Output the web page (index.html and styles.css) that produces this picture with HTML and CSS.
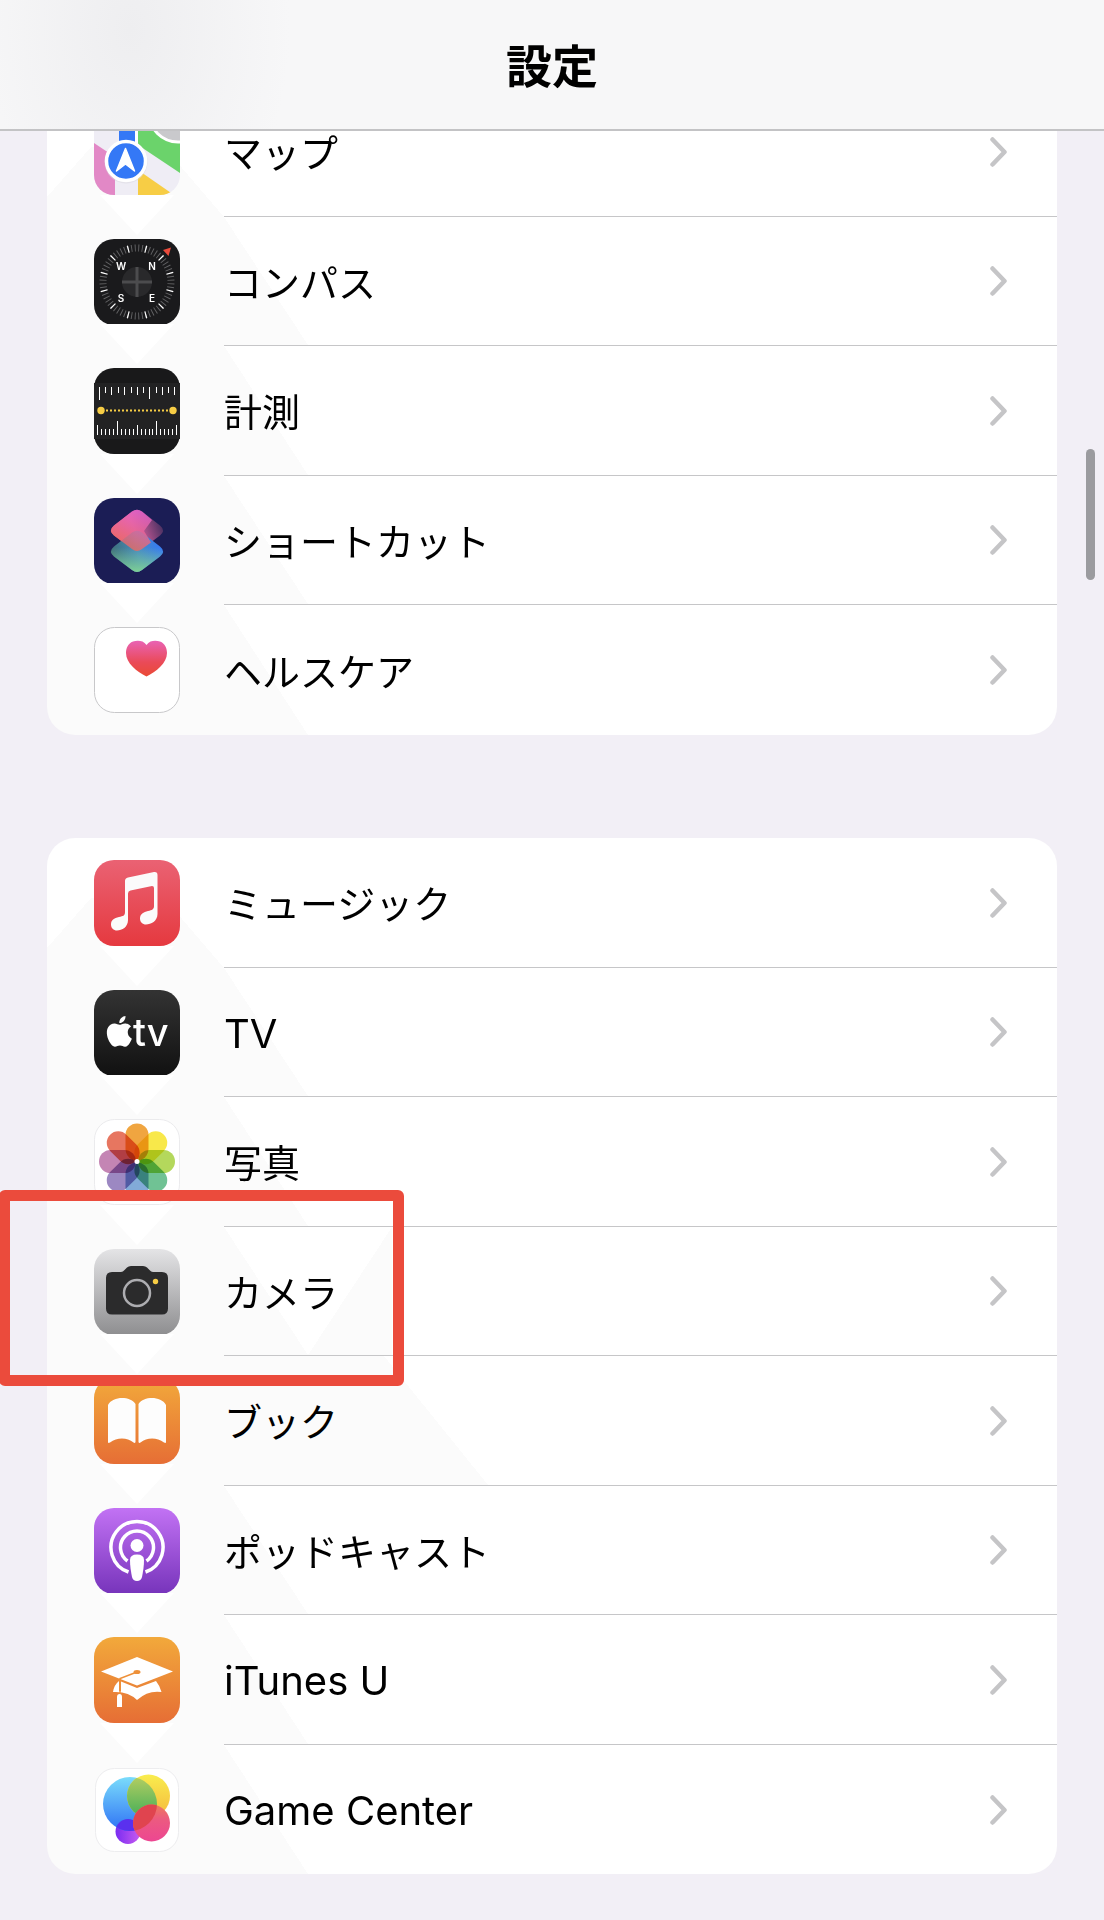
FILE: index.html
```html
<!DOCTYPE html>
<html lang="ja">
<head>
<meta charset="utf-8">
<meta name="viewport" content="width=device-width, initial-scale=1">
<title>設定</title>
<link rel="stylesheet" href="styles.css">
</head>
<body>
<svg class="defs" aria-hidden="true">
  <defs>
    <symbol id="chevron" viewBox="0 0 18 30"><path d="M2.500 2.500 14.500 15 2.500 27.500" fill="none" stroke="#c5c5c7" stroke-width="4.500" stroke-linecap="round" stroke-linejoin="round"/></symbol>
    <linearGradient id="gRed" x1="0" y1="0" x2="0" y2="1"><stop offset="0" stop-color="#ea6273"/><stop offset="1" stop-color="#e5393f"/></linearGradient>
    <linearGradient id="gBlack" x1="0" y1="0" x2="0" y2="1"><stop offset="0" stop-color="#333"/><stop offset="1" stop-color="#111"/></linearGradient>
    <linearGradient id="gGray" x1="0" y1="0" x2="0" y2="1"><stop offset="0" stop-color="#e4e4e6"/><stop offset="1" stop-color="#8e8e90"/></linearGradient>
    <linearGradient id="gOrange" x1="0" y1="0" x2="0" y2="1"><stop offset="0" stop-color="#f2a93b"/><stop offset="1" stop-color="#e66e35"/></linearGradient>
    <linearGradient id="gPurple" x1="0" y1="0" x2="0" y2="1"><stop offset="0" stop-color="#c272f4"/><stop offset="1" stop-color="#7734bb"/></linearGradient>
    <linearGradient id="gHeart" x1="0" y1="0" x2="0" y2="1"><stop offset="0" stop-color="#e963b4"/><stop offset=".6" stop-color="#ea4a58"/><stop offset="1" stop-color="#ea4a35"/></linearGradient>
    <linearGradient id="gTop" x1="0" y1=".8" x2="1" y2=".5"><stop offset="0" stop-color="#ee6a50"/><stop offset=".5" stop-color="#de62a0"/><stop offset="1" stop-color="#4f3264"/></linearGradient>
    <linearGradient id="gTopWarm" x1=".6" y1="0" x2=".3" y2="1"><stop offset="0" stop-color="#e763d0"/><stop offset="1" stop-color="#ec6a55"/></linearGradient>
    <linearGradient id="gLow" x1="0" y1=".4" x2="1" y2=".3"><stop offset="0" stop-color="#3d6e78"/><stop offset=".5" stop-color="#488dc0"/><stop offset="1" stop-color="#3377fa"/></linearGradient>
    <linearGradient id="gLowFade" x1="0" y1="0" x2="0" y2="1"><stop offset=".4" stop-color="#7ac998" stop-opacity="0"/><stop offset="1" stop-color="#7ed095"/></linearGradient>
    <linearGradient id="gBlue" x1="0" y1="0" x2="0" y2="1"><stop offset="0" stop-color="#7adcfb"/><stop offset="1" stop-color="#2f72f5"/></linearGradient>
    <linearGradient id="gYellow" x1="0" y1="0" x2="0" y2="1"><stop offset="0" stop-color="#f9ed4e"/><stop offset="1" stop-color="#f5b83d"/></linearGradient>
    <linearGradient id="gGreen" x1="0" y1="0" x2="0" y2="1"><stop offset="0" stop-color="#b9cf62"/><stop offset="1" stop-color="#45ae58"/></linearGradient>
    <linearGradient id="gViolet" x1="0" y1="0" x2="1" y2="0"><stop offset="0" stop-color="#7a2cf2"/><stop offset="1" stop-color="#c95cf0"/></linearGradient>
    <linearGradient id="gPink" x1="0" y1="0" x2="0" y2="1"><stop offset="0" stop-color="#ee7a5c"/><stop offset=".4" stop-color="#ec5a80"/><stop offset="1" stop-color="#ed4692"/></linearGradient>
    <clipPath id="tile"><rect width="86" height="86" rx="20"/></clipPath>
    <clipPath id="blueBall"><circle cx="36" cy="37" r="27"/></clipPath>
  </defs>
</svg>

<header class="navbar"><h1>設定</h1></header>

<main class="settings">
  <ul class="card">
    <li class="item"><a class="row" href="#maps">
      <svg class="icon" viewBox="0 0 86 86" aria-hidden="true"><g clip-path="url(#tile)">
        <rect width="86" height="86" fill="#efedf5"/>
        <path d="M0 34 21 48V86H0Z" fill="#e288c6"/>
        <path d="M44 0H86V64L44 36Z" fill="#6bd36b"/>
        <path d="M44 61 80 86H44Z" fill="#f7cd45"/>
        <path d="M42.500 0V36" stroke="#fff" stroke-width="3"/>
        <rect x="25" width="16" height="45" fill="#3478f6"/>
        <circle cx="84" cy="4" r="29" fill="#c9c9cc" stroke="#fff" stroke-width="3"/>
        <circle cx="32" cy="53" r="21.500" fill="#d9d7df" opacity=".5"/>
        <circle cx="32" cy="52" r="19.500" fill="#3478f6" stroke="#fff" stroke-width="3.500"/>
        <path d="M31.500 39.500 40.500 62 31.500 55 22.500 62Z" fill="#fff" stroke="#fff" stroke-width="1.500" stroke-linejoin="round"/>
      </g></svg>
      <span class="body"><span class="label">マップ</span><svg class="chevron" aria-hidden="true"><use href="#chevron"/></svg></span></a></li>
    <li class="item"><a class="row" href="#compass">
      <svg class="icon" viewBox="0 0 86 86" aria-hidden="true">
        <rect width="86" height="86" rx="20" fill="#1a1a1c"/>
        <circle cx="43" cy="43" r="34" pathLength="360" fill="none" stroke="#626264" stroke-width="7" stroke-dasharray="1.600 4.400" stroke-dashoffset="-2.200"/>
        <circle cx="43" cy="43" r="34" pathLength="360" fill="none" stroke="#fff" stroke-width="7" stroke-dasharray="2 28" stroke-dashoffset="-14"/>
        <circle cx="43" cy="43" r="15" fill="#29292b"/>
        <path d="M43 28V58M28 43H58" stroke="#4c4c4e" stroke-width="3"/>
        <path d="M69 11 77 8.500 74.500 17Z" fill="#eb4b3c"/>
        <g class="compass-text"><text x="27" y="31">W</text><text x="58" y="31">N</text><text x="27" y="63">S</text><text x="58" y="63">E</text></g>
      </svg>
      <span class="body"><span class="label">コンパス</span><svg class="chevron" aria-hidden="true"><use href="#chevron"/></svg></span></a></li>
    <li class="item"><a class="row" href="#measure">
      <svg class="icon" viewBox="0 0 86 86" aria-hidden="true">
        <rect width="86" height="86" rx="20" fill="#19191a"/><rect y="15" width="86" height="56" fill="#222223"/>
        <path d="M5.500 19v13M11.500 19v6M17.500 19v8M24.500 19v6M30.500 19v8M37.500 19v6M43.500 19v8M49.500 19v6M55.500 19v12M62.500 19v6M68.500 19v8M74.500 19v6M80.500 19v8" stroke="#fff"/>
        <path d="M3.500 67v-10M7.500 67v-6M11.500 67v-6M15.500 67v-6M19.500 67v-6M23.500 67v-14M27.500 67v-6M31.500 67v-6M35.500 67v-6M39.500 67v-6M43.500 67v-10M47.500 67v-6M51.500 67v-6M55.500 67v-6M58.500 67v-6M62.500 67v-14M66.500 67v-6M70.500 67v-6M74.500 67v-6M78.500 67v-6M82.500 67v-10" stroke="#fff"/>
        <path d="M12 42.500H76" stroke="#f7cd45" stroke-width="2" stroke-dasharray="2 2"/>
        <circle cx="7" cy="42.500" r="3.700" fill="#f7cd45"/><circle cx="79" cy="42.500" r="3.700" fill="#f7cd45"/>
      </svg>
      <span class="body"><span class="label">計測</span><svg class="chevron" aria-hidden="true"><use href="#chevron"/></svg></span></a></li>
    <li class="item"><a class="row" href="#shortcuts">
      <svg class="icon" viewBox="0 0 86 86" aria-hidden="true">
        <rect width="86" height="86" rx="20" fill="#1b1d55"/>
        <path d="M38 13.500Q43 10 48 13.500L66 27.500Q72 32.500 66 37.500L48 51Q43 55 38 51L20 37.500Q14 32.500 20 27.500Z" fill="url(#gTop)"/>
        <path d="M38 34.500Q43 31 48 34.500L66 48.500Q72 53.500 66 58.500L48 72Q43 76 38 72L20 58.500Q14 53.500 20 48.500Z" fill="url(#gLow)"/>
        <path d="M38 34.500Q43 31 48 34.500L66 48.500Q72 53.500 66 58.500L48 72Q43 76 38 72L20 58.500Q14 53.500 20 48.500Z" fill="url(#gLowFade)"/>
        <path d="M38 13.500Q43 10 48 13.500L58 22 50 33 57 44.500 48 51Q43 55 38 51L20 37.500Q14 32.500 20 27.500Z" fill="url(#gTopWarm)" opacity=".8"/>
      </svg>
      <span class="body"><span class="label">ショートカット</span><svg class="chevron" aria-hidden="true"><use href="#chevron"/></svg></span></a></li>
    <li class="item"><a class="row" href="#health">
      <svg class="icon" viewBox="0 0 86 86" aria-hidden="true">
        <rect x=".5" y=".5" width="85" height="85" rx="20" fill="#fff" stroke="#c8c8ca"/>
        <path d="M52.500 18C49 13 43 13.500 39 14.500 34 16.500 32 21 32 26 32 36 43 45 52.500 49.500 62 45 73 36 73 26 73 21 71 16.500 66 14.500 62 13.500 56 13 52.500 18Z" fill="url(#gHeart)"/>
      </svg>
      <span class="body"><span class="label">ヘルスケア</span><svg class="chevron" aria-hidden="true"><use href="#chevron"/></svg></span></a></li>
  </ul>

  <ul class="card">
    <li class="item"><a class="row" href="#music">
      <svg class="icon" viewBox="0 0 86 86" aria-hidden="true">
        <rect width="86" height="86" rx="20" fill="url(#gRed)"/>
        <path d="M31 21Q31 18 34 17.500L60 12Q63.500 11.500 63.500 15V54C63.500 61 57 64.500 52 64.500 48.500 64.500 46 62 46 58.500 46 54 49.500 52 54 51 58 50 60 49.500 60 46V28Q60 26 58 26L36.500 30.500Q34 31 34 33.500V60C34 67 28 70.500 23 70.500 19.500 70.500 17 68 17 64.500 17 60 20 58 25 57 29 56 31 56 31 52Z" fill="#fbfbfb"/>
      </svg>
      <span class="body"><span class="label">ミュージック</span><svg class="chevron" aria-hidden="true"><use href="#chevron"/></svg></span></a></li>
    <li class="item"><a class="row" href="#tv">
      <svg class="icon" viewBox="0 0 86 86" aria-hidden="true">
        <rect width="86" height="86" rx="20" fill="url(#gBlack)"/>
        <path transform="translate(10 26) scale(1.280)" fill="#fff" d="M12.152 6.896c-.948 0-2.415-1.078-3.960-1.040-2.040.027-3.910 1.183-4.961 3.014-2.117 3.675-.546 9.103 1.519 12.090 1.013 1.454 2.208 3.090 3.792 3.039 1.520-.065 2.090-.987 3.935-.987 1.831 0 2.350.987 3.960.948 1.637-.026 2.676-1.480 3.676-2.948 1.156-1.688 1.636-3.325 1.662-3.415-.039-.013-3.182-1.221-3.220-4.857-.026-3.040 2.480-4.494 2.597-4.559-1.429-2.090-3.623-2.324-4.390-2.376-2-.156-3.675 1.090-4.610 1.090zM15.530 3.830c.843-1.012 1.400-2.427 1.245-3.830-1.207.052-2.662.805-3.532 1.818-.780.896-1.454 2.338-1.273 3.714 1.338.104 2.715-.688 3.559-1.701"/>
        <text class="tv-text" x="39" y="56">tv</text>
      </svg>
      <span class="body"><span class="label latin">TV</span><svg class="chevron" aria-hidden="true"><use href="#chevron"/></svg></span></a></li>
    <li class="item"><a class="row" href="#photos">
      <svg class="icon" viewBox="0 0 86 86" aria-hidden="true">
        <rect x=".5" y=".5" width="85" height="85" rx="20" fill="#fff" stroke="#ebebed"/>
        <g class="petals" transform="translate(43 42.500)">
          <rect x="-11.500" y="-38" width="23" height="37" rx="11.500" fill="#f0a540"/>
          <rect x="-11.500" y="-38" width="23" height="37" rx="11.500" fill="#f8e84a" transform="rotate(45)"/>
          <rect x="-11.500" y="-38" width="23" height="37" rx="11.500" fill="#b4d85c" transform="rotate(90)"/>
          <rect x="-11.500" y="-38" width="23" height="37" rx="11.500" fill="#70c294" transform="rotate(135)"/>
          <rect x="-11.500" y="-38" width="23" height="37" rx="11.500" fill="#82abd8" transform="rotate(180)"/>
          <rect x="-11.500" y="-38" width="23" height="37" rx="11.500" fill="#9c88c2" transform="rotate(225)"/>
          <rect x="-11.500" y="-38" width="23" height="37" rx="11.500" fill="#c485b4" transform="rotate(270)"/>
          <rect x="-11.500" y="-38" width="23" height="37" rx="11.500" fill="#e77660" transform="rotate(315)"/>
        </g>
        <circle cx="43" cy="42.500" r="2.500" fill="#fff"/>
      </svg>
      <span class="body"><span class="label">写真</span><svg class="chevron" aria-hidden="true"><use href="#chevron"/></svg></span></a></li>
    <li class="item marked"><a class="row" href="#camera">
      <svg class="icon" viewBox="0 0 86 86" aria-hidden="true">
        <rect width="86" height="86" rx="20" fill="url(#gGray)"/>
        <path d="M18 23H27Q29 23 30.500 21L33 18.500Q34.500 17 37 17H49Q51.500 17 53 18.500L55.500 21Q57 23 59 23H68Q74 23 74 29V59.500Q74 65.500 68 65.500H18Q12 65.500 12 59.500V29Q12 23 18 23Z" fill="#2b2b2c"/>
        <circle cx="43" cy="44" r="13" fill="none" stroke="#adadb1" stroke-width="2.500"/>
        <circle cx="61.500" cy="32.500" r="2.700" fill="#f7cd45"/>
      </svg>
      <span class="body"><span class="label">カメラ</span><svg class="chevron" aria-hidden="true"><use href="#chevron"/></svg></span></a></li>
    <li class="item"><a class="row" href="#books">
      <svg class="icon" viewBox="0 0 86 86" aria-hidden="true">
        <rect width="86" height="86" rx="20" fill="url(#gOrange)"/>
        <path d="M14 27C19 18 36 18 41.500 26V64Q41 65.500 39.500 64.500C33 59 23 59 16 64.500Q14 65.500 14 64ZM72 27C67 18 50 18 44.500 26V64Q45 65.500 46.500 64.500C53 59 63 59 70 64.500Q72 65.500 72 64Z" fill="#fdfdfd"/>
      </svg>
      <span class="body"><span class="label">ブック</span><svg class="chevron" aria-hidden="true"><use href="#chevron"/></svg></span></a></li>
    <li class="item"><a class="row" href="#podcasts">
      <svg class="icon" viewBox="0 0 86 86" aria-hidden="true">
        <rect width="86" height="86" rx="20" fill="url(#gPurple)"/>
        <path d="M34.500 64A26 26 0 1 1 51.500 64M33.500 53A16.500 16.500 0 1 1 52.500 53" fill="none" stroke="#fff" stroke-width="3.500"/>
        <circle cx="43" cy="37.500" r="6.500" fill="#fff"/>
        <path d="M36 52Q36 46.500 43 46.500T50 52C50 58 49 64 48 69Q47 73 43 73T38 69C37 64 36 58 36 52Z" fill="#fff"/>
      </svg>
      <span class="body"><span class="label">ポッドキャスト</span><svg class="chevron" aria-hidden="true"><use href="#chevron"/></svg></span></a></li>
    <li class="item"><a class="row" href="#itunes-u">
      <svg class="icon" viewBox="0 0 86 86" aria-hidden="true">
        <rect width="86" height="86" rx="20" fill="url(#gOrange)"/>
        <path d="M7 34.500 43 20 79 34.500 43 48.500Z" fill="#fff"/>
        <path d="M27 44.500 43 51 62 44Q66 49 67.500 55 54 53 43 63 34 54 19 55 20 48 25 44V54H27Z" fill="#fff"/>
        <path d="M43 35 26 41.500V57" fill="none" stroke="#ee9038" stroke-width="1.500"/>
        <ellipse cx="43" cy="35" rx="3.500" ry="2" fill="#ee9038"/>
        <path d="M23 70V60Q23 57 25.500 57T28 60V70Z" fill="#fff"/>
      </svg>
      <span class="body"><span class="label latin">iTunes U</span><svg class="chevron" aria-hidden="true"><use href="#chevron"/></svg></span></a></li>
    <li class="item"><a class="row" href="#game-center">
      <svg class="icon" viewBox="0 0 86 86" aria-hidden="true">
        <rect x="1.500" y="1.500" width="83" height="83" rx="19" fill="#fff" stroke="#ededef"/>
        <circle cx="34" cy="64.500" r="12.500" fill="url(#gViolet)"/>
        <circle cx="36" cy="37" r="27" fill="url(#gBlue)"/>
        <circle cx="54.500" cy="29" r="21.500" fill="url(#gYellow)"/>
        <g clip-path="url(#blueBall)"><circle cx="54.500" cy="29" r="21.500" fill="url(#gGreen)"/><circle cx="34" cy="64.500" r="12.500" fill="#5a30ee"/></g>
        <circle cx="57.500" cy="56" r="18.500" fill="url(#gPink)"/>
        <g clip-path="url(#blueBall)"><circle cx="57.500" cy="56" r="18.500" fill="#e0444f"/></g>
      </svg>
      <span class="body"><span class="label latin">Game Center</span><svg class="chevron" aria-hidden="true"><use href="#chevron"/></svg></span></a></li>
  </ul>
</main>
<div class="scroll-thumb" aria-hidden="true"></div>
</body>
</html>
```
FILE: styles.css
```css
*,
*::before,
*::after {
  box-sizing: border-box;
}

body {
  margin: 0;
  background: #f2eff6;
  color: #000;
  font-family: Inter, "Noto Sans CJK JP", sans-serif;
}

.defs {
  position: absolute;
  width: 0;
  height: 0;
}

/* Title bar stays above the scrolling list */
.navbar {
  position: fixed;
  z-index: 2;
  top: 0;
  left: 0;
  right: 0;
  display: flex;
  align-items: center;
  justify-content: center;
  height: 131px;
  padding-top: 2px;
  border-bottom: 2px solid #c3c3c5;
  background: radial-gradient(ellipse 160px 240px at 130px 30px, #eeeef0, #f7f7f8);
}

.navbar h1 {
  margin: 0;
  font-size: 46px;
  line-height: 64px;
  font-weight: 700;
}

.settings {
  display: flex;
  flex-direction: column;
  gap: 103px;
  padding: 87px 47px 46px;
}

/* Faint faceted tint down the icon column */
.card {
  margin: 0;
  padding: 0;
  list-style: none;
  border-radius: 28px;
  background:
    linear-gradient(#fff, #fff) 0 0 / 177px 60px no-repeat,
    linear-gradient(to bottom right, #fff 50%, transparent 50%) 0 60px / 44px 50px no-repeat,
    linear-gradient(to bottom left, #fff 50%, transparent 50%) 117px 60px / 60px 70px no-repeat,
    linear-gradient(#fbfbfb, #fbfbfb) 0 0 / 177px 100% no-repeat,
    #fff;
}

.item {
  position: relative;
  height: 130px;
}

.item:nth-child(even) {
  height: 129px;
}

.item + .item::before {
  content: "";
  position: absolute;
  top: -22px;
  left: 53px;
  width: 74px;
  height: 40px;
  background: #fff;
  clip-path: polygon(0 0, 100% 0, 50% 100%);
}

.row {
  display: flex;
  align-items: center;
  gap: 44px;
  height: 100%;
  padding-left: 47px;
  color: inherit;
  text-decoration: none;
}

.icon {
  flex: none;
  width: 86px;
  height: 86px;
}

.body {
  flex: 1;
  display: flex;
  align-items: center;
  justify-content: space-between;
  height: 100%;
  padding-right: 49px;
  border-bottom: 1px solid #c6c6c8;
  background: linear-gradient(to top right, #fbfbfb 50%, transparent 50%) 0 0 / 84px 100% no-repeat;
}

.item:first-child .body {
  background: none;
}

.item:last-child .body {
  border-bottom: 0;
}

.marked .body {
  background:
    linear-gradient(to top right, #fbfbfb 50%, transparent 50%) 0 0 / 84px 100% no-repeat,
    linear-gradient(to top left, #fbfbfb 50%, transparent 50%) 84px 0 / 84px 100% no-repeat;
}

.marked + .item .body {
  background:
    linear-gradient(#fbfbfb, #fbfbfb) 0 0 / 160px 100% no-repeat,
    linear-gradient(to top right, #fbfbfb 50%, transparent 50%) 160px 0 / 104px 100% no-repeat;
}

.label {
  padding-top: 3px;
  font-size: 38px;
  line-height: 56px;
}

.latin {
  font-size: 40px;
}

.chevron {
  flex: none;
  width: 18px;
  height: 30px;
}

/* Highlight frame drawn round one entry */
.marked::after {
  content: "";
  position: absolute;
  z-index: 1;
  top: -37px;
  bottom: -30px;
  left: -48px;
  width: 405px;
  border: 11px solid #eb4b3c;
  border-radius: 6px;
  pointer-events: none;
}

.compass-text {
  fill: #fff;
  font-size: 10px;
  font-weight: 600;
  text-anchor: middle;
}

.tv-text {
  fill: #fff;
  font-size: 38px;
  font-weight: 500;
}

.petals rect {
  mix-blend-mode: multiply;
}

.scroll-thumb {
  position: fixed;
  z-index: 1;
  top: 449px;
  right: 9px;
  width: 9px;
  height: 131px;
  border-radius: 5px;
  background: #9b9b9f;
}
```
